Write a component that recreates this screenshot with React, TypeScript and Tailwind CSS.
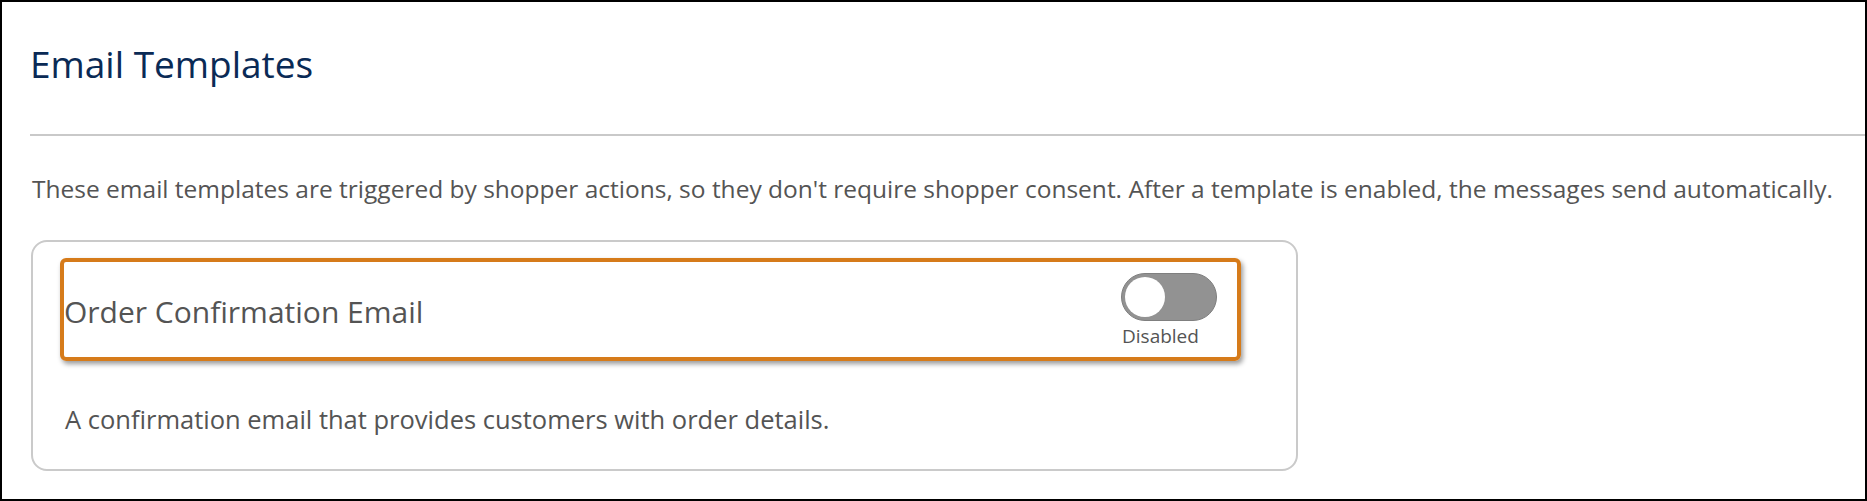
import React from 'react';

const font = { fontFamily: '"Open Sans", "Noto Sans", Arial, sans-serif' };

const Toggle: React.FC<{ on?: boolean }> = ({ on = false }) => (
  <div
    className={`relative w-[96px] h-[48px] rounded-full border border-[#7f7f7f] ${
      on ? 'bg-[#0176d3]' : 'bg-[#929292]'
    }`}
  >
    <div
      className={`absolute top-[3px] w-[40px] h-[40px] rounded-full bg-white ${
        on ? 'left-[51px]' : 'left-[3px]'
      }`}
    />
  </div>
);

const TemplateCard: React.FC<{ name: string; description: string }> = ({ name, description }) => (
  <div className="ml-[1px] w-[1267px] h-[231px] border-2 border-[#cacaca] rounded-[16px] bg-white">
    <div className="ml-[27px] mt-[16px] w-[1181px] h-[103px] border-[4px] border-[#d67b1a] rounded-[6px] shadow-[2px_3px_5px_rgba(0,0,0,0.4)] flex justify-between">
      <h4 className="pt-[29px] text-[30px] leading-[41px] text-[#545454]">{name}</h4>
      <div className="pt-[11px] pr-[20px] flex flex-col items-start">
        <Toggle />
        <span className="mt-[2px] ml-[1px] text-[19px] leading-[26px] text-[#545454]">Disabled</span>
      </div>
    </div>
    <p className="pl-[32px] mt-[41px] text-[25.5px] leading-[35px] text-[#545454]">{description}</p>
  </div>
);

export default function App() {
  return (
    <div style={font} className="w-full h-[501px] border-2 border-black bg-white overflow-hidden">
      <div className="pl-[28px] pt-[37px]">
        <h1 className="text-[37px] leading-[50px] text-[#0a2a55]">Email Templates</h1>
        <div className="mt-[45px] h-[2px] bg-[#c9c9c9]" />
        <p className="ml-[2px] mt-[36px] text-[24.5px] leading-[33px] text-[#545454] whitespace-nowrap">
          These email templates are triggered by shopper actions, so they don't require shopper consent. After a
          template is enabled, the messages send automatically.
        </p>
        <div className="mt-[35px]">
          <TemplateCard
            name="Order Confirmation Email"
            description="A confirmation email that provides customers with order details."
          />
        </div>
      </div>
    </div>
  );
}
